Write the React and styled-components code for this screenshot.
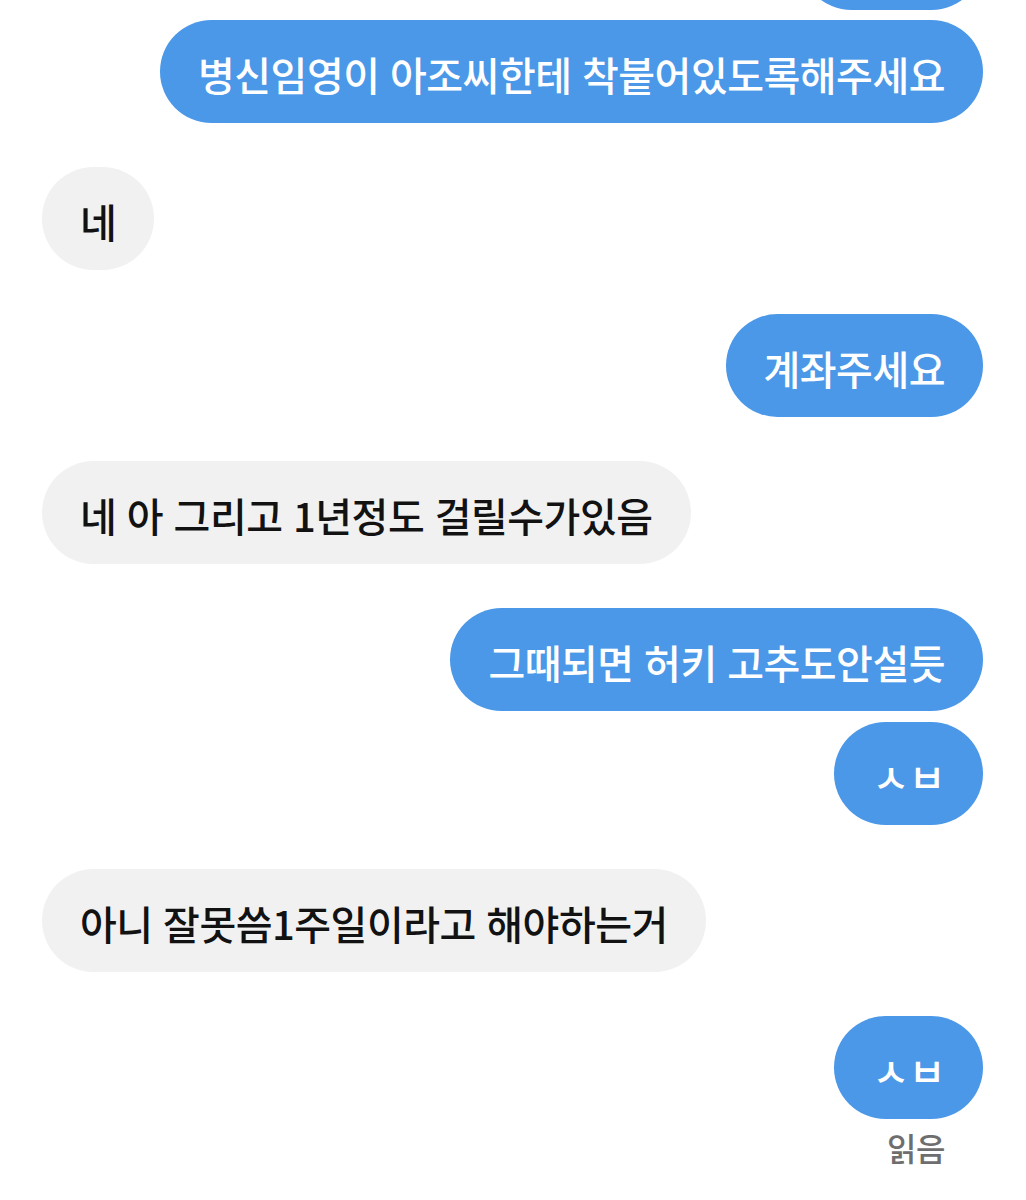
import React from 'react';
import styled, { createGlobalStyle } from 'styled-components';

const GlobalStyle = createGlobalStyle`
  html, body {
    margin: 0;
    padding: 0;
    background: #ffffff;
  }
  body {
    font-family: "Noto Sans CJK KR", "Noto Sans", sans-serif;
    overflow: hidden;
  }
`;

const Screen = styled.div`
  width: 1026px;
  height: 1200px;
  overflow: hidden;
  background: #fff;
`;

const Thread = styled.div`
  display: flex;
  flex-direction: column;
  padding: 0 43px 0 42px;
  margin-top: -93px; // 위쪽 말풍선이 살짝 잘려 보이게
`;

const Row = styled.div`
  display: flex;
  flex-direction: column;
  align-items: ${({ $mine }) => ($mine ? 'flex-end' : 'flex-start')};
  margin-top: ${({ $gap }) => $gap}px;
`;

const Bubble = styled.div`
  box-sizing: border-box;
  height: 103px;
  min-width: ${({ $minWidth }) => $minWidth || 0}px;
  padding: 0 38px;
  display: flex;
  align-items: center;
  border-radius: 52px;
  background: ${({ $mine }) => ($mine ? '#4b98e8' : '#f1f1f1')};
  color: ${({ $mine }) => ($mine ? '#ffffff' : '#121212')};
  font-size: 40px;
  font-weight: 500;
  letter-spacing: -0.5px;
  word-spacing: 2px;
  white-space: nowrap;
  line-height: 48px;
`;

const BubbleText = styled.span`
  display: block;
  transform: translateY(2px);
`;

const ReadMark = styled.div`
  margin-top: 9px;
  padding-right: 38px;
  font-size: 32px;
  font-weight: 500;
  line-height: 38px;
  letter-spacing: -0.5px;
  color: #6e6e6e;
`;

const messages = [
  { mine: true, text: '', gap: 0, minWidth: 183 },
  { mine: true, text: '병신임영이 아조씨한테 착붙어있도록해주세요', gap: 10 },
  { mine: false, text: '네', gap: 44 },
  { mine: true, text: '계좌주세요', gap: 44 },
  { mine: false, text: '네 아 그리고 1년정도 걸릴수가있음', gap: 44 },
  { mine: true, text: '그때되면 허키 고추도안설듯', gap: 44 },
  { mine: true, text: 'ㅅㅂ', gap: 11 },
  { mine: false, text: '아니 잘못씀1주일이라고 해야하는거', gap: 44 },
  { mine: true, text: 'ㅅㅂ', gap: 44, read: true },
];

const App = () => {
  return (
    <Screen>
      <GlobalStyle />
      <Thread>
        {messages.map((m, i) => (
          <Row key={i} $mine={m.mine} $gap={m.gap}>
            <Bubble $mine={m.mine} $minWidth={m.minWidth}>
              {m.text && <BubbleText>{m.text}</BubbleText>}
            </Bubble>
            {m.read && <ReadMark>읽음</ReadMark>}
          </Row>
        ))}
      </Thread>
    </Screen>
  );
};

export default App;
